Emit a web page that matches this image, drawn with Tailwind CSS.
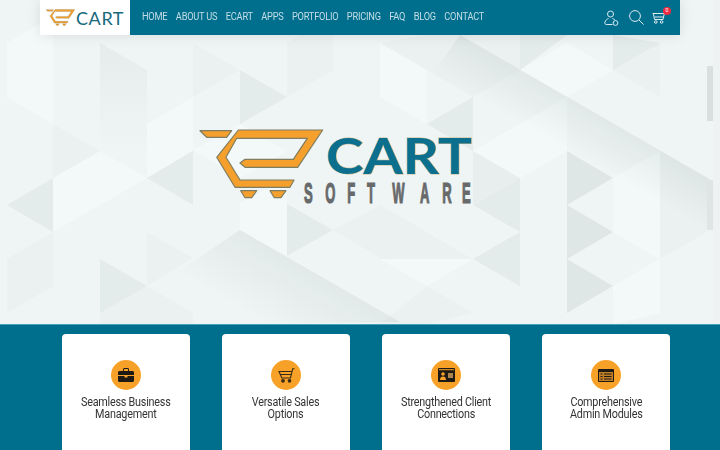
<!DOCTYPE html>
<html lang="en">
<head>
  <meta charset="UTF-8" />
  <meta name="viewport" content="width=device-width, initial-scale=1.0"/>
  <title>eCart Software</title>
  <script src="https://cdn.jsdelivr.net/npm/@tailwindcss/browser@4"></script>
</head>
<body class="w-full h-[450px] overflow-hidden bg-[#006f8e] font-['Roboto',sans-serif]">

  <!-- hero -->
  <section class="relative h-[324px] bg-[#eff5f5] flex flex-col overflow-hidden">
    <!-- triangle backdrop -->
    <svg class="absolute inset-0 blur-[0.5px]" width="720" height="324" viewBox="0 0 720 324">
      <defs>
        <linearGradient id="s1" gradientUnits="userSpaceOnUse" x1="520" y1="70" x2="497" y2="110">
          <stop offset="0" stop-color="#8a9a9a" stop-opacity=".14"/><stop offset="1" stop-color="#8a9a9a" stop-opacity="0"/>
        </linearGradient>
        <linearGradient id="s2" gradientUnits="userSpaceOnUse" x1="240" y1="230" x2="205" y2="290">
          <stop offset="0" stop-color="#8a9a9a" stop-opacity=".13"/><stop offset="1" stop-color="#8a9a9a" stop-opacity="0"/>
        </linearGradient>
        <linearGradient id="s3" gradientUnits="userSpaceOnUse" x1="100" y1="43" x2="100" y2="151">
          <stop offset="0" stop-color="#e5ecec"/><stop offset="1" stop-color="#eff5f5"/>
        </linearGradient>
      </defs>
      <!-- light facets -->
      <g fill="#f3f9f9">
        <polygon points="7,43 53,16 53,124 7,97"/>
        <polygon points="147,124 193,97 193,150 147,178"/>
        <polygon points="53,178 100,151 100,205 53,232"/>
        <polygon points="100,151 147,178 100,205"/>
        <polygon points="240,203 287,178 287,256 240,230"/>
        <polygon points="193,150 240,124 287,151 240,178"/>
        <polygon points="380,43 427,70 427,124 380,97"/>
        <polygon points="473,151 520,124 567,151 520,178"/>
        <polygon points="520,124 567,97 567,151"/>
        <polygon points="613,178 660,151 660,259 613,232"/>
        <polygon points="427,232 473,259 427,286 380,259"/>
        <polygon points="520,70 567,43 613,70 567,97"/>
        <polygon points="613,286 660,259 660,313 613,324"/>
      </g>
      <!-- grey facets -->
      <g fill="#ebf1f1">
        <polygon points="7,259 53,232 53,286 7,313"/>
        <polygon points="147,232 193,258 147,286"/>
        <polygon points="53,124 100,151 53,178"/>
        <polygon points="193,43 240,70 193,97"/>
        <polygon points="287,43 333,16 333,70 287,97"/>
        <polygon points="333,230 380,205 380,258"/>
        <polygon points="380,205 427,232 473,259 380,259"/>
        <polygon points="380,43 427,35 567,35 520,70 473,97 427,70"/>
        <polygon points="613,70 660,97 660,43"/>
        <polygon points="660,151 707,178 707,232 660,259"/>
        <polygon points="100,310 147,286 193,313 193,324 100,324"/>
        <polygon points="427,286 473,313 427,324 380,324"/>
      </g>
      <polygon points="100,43 147,70 147,178 100,151" fill="url(#s3)"/>
      <!-- darker facets -->
      <g fill="#e4ebeb">
        <polygon points="240,70 287,97 240,124"/>
        <polygon points="7,205 53,178 53,232"/>
        <polygon points="100,259 147,286 100,313"/>
        <polygon points="147,178 193,151 193,205"/>
        <polygon points="287,204 333,230 287,256"/>
        <polygon points="520,35 567,35 520,70"/>
        <polygon points="613,35 660,43 613,70"/>
        <polygon points="427,124 473,97 473,151"/>
        <polygon points="473,259 520,232 520,286"/>
        <polygon points="473,205 520,178 520,232"/>
      </g>
      <g fill="#dfe6e6">
        <polygon points="567,151 613,178 567,205"/>
        <polygon points="567,205 613,232 567,259"/>
        <polygon points="567,259 613,286 567,313"/>
      </g>
      <polygon points="473,151 520,178 473,205" fill="#e8eeee"/>
      <!-- long diagonal shadows -->
      <polygon points="460,35 713,181 713,300 400,120" fill="url(#s1)"/>
      <polygon points="240,230 400,322 240,324 160,284" fill="url(#s2)"/>
      <!-- strip on the right edge -->
      <rect x="713" y="0" width="7" height="324" fill="#eef2f3"/>
      <rect x="707" y="66" width="6" height="55" fill="#d8dfdf"/>
      <rect x="707" y="180" width="6" height="50" fill="#dfe5e5"/>
    </svg>

    <!-- header -->
    <header class="relative mx-auto w-[640px] h-[35px] flex shadow-[0_0_14px_rgba(0,0,0,0.1)]">
      <a href="#" class="w-[90px] h-full bg-white flex items-center pl-[6px]">
        <svg width="29" height="17" viewBox="200 130 123 68">
          <use href="#cart-mark"/>
        </svg>
        <span class="ml-px text-[18px] leading-none tracking-[0.6px] text-[#17697c] font-['Lato',sans-serif]">CART</span>
      </a>
      <nav class="flex-1 bg-[#006f8e] flex items-center pl-3 pr-[15px]">
        <ul class="flex gap-[9.6px] text-[10.5px] tracking-[-0.25px] leading-none text-[#c4dde5] origin-left scale-x-[.88]">
          <li><a href="#">HOME</a></li>
          <li><a href="#">ABOUT US</a></li>
          <li><a href="#">ECART</a></li>
          <li><a href="#">APPS</a></li>
          <li><a href="#">PORTFOLIO</a></li>
          <li><a href="#">PRICING</a></li>
          <li><a href="#">FAQ</a></li>
          <li><a href="#">BLOG</a></li>
          <li><a href="#">CONTACT</a></li>
        </ul>
        <div class="ml-auto flex items-center text-[#dcebf0]">
          <svg width="15" height="16" viewBox="0 0 15 16" fill="none" stroke="currentColor" stroke-width="1">
            <circle cx="6.500" cy="4" r="3"/>
            <path d="M8.500 14.500H2.500C1 14.500.5 13.400 1 12c.6-1.800 2-3 3.500-3.500M8.500 8.500c1 .3 1.900.9 2.500 1.700"/>
            <circle cx="11.500" cy="13" r="2.400"/>
          </svg>
          <svg class="ml-[10px]" width="15" height="15" viewBox="0 0 15 15" fill="none" stroke="currentColor" stroke-width="1">
            <circle cx="6" cy="6" r="5.400"/>
            <path d="M10 10l4.600 4.600"/>
          </svg>
          <div class="relative ml-[8px] w-[13px] h-[12px]">
            <svg width="13" height="12" viewBox="0 0 13 12" fill="none" stroke="currentColor" stroke-width="1">
              <path d="M.5 1.500h11.800L11 7.500H2.500L1.500 2M2.600 5h9"/>
              <circle cx="3.800" cy="10" r="1.300"/>
              <circle cx="9.600" cy="10" r="1.300"/>
            </svg>
            <span class="absolute top-[-5px] left-[11px] w-[8px] h-[8px] rounded-full bg-[#ef2b41] flex items-center justify-center text-[5px] leading-none text-white">0</span>
          </div>
        </div>
      </nav>
    </header>

    <!-- main logo -->
    <svg class="relative ml-[195px] mt-[90px]" width="285" height="82" viewBox="195 125 285 82">
      <defs>
        <g id="cart-mark" fill="#f5a02c" stroke="#7f7d62" stroke-width="1.200" stroke-linejoin="round">
          <polygon points="200,130.700 231.700,130.700 226.700,137.300 206.700,137.300"/>
          <polygon points="238.300,130 322.700,130 297.700,167.300 245,167.300 240,163 245,159.300 293.300,159.300 307.300,138.300 236.700,138.300 226,157.300 240,180 294,180 290,187.300 235,187.300 216.700,157.300"/>
          <polygon points="240.700,190.700 256.700,190.700 251.700,197.700 245,197.700"/>
          <polygon points="270,190.700 286,190.700 281,197.700 274.300,197.700"/>
        </g>
      </defs>
      <use href="#cart-mark"/>
      <text x="326" y="174" textLength="146" lengthAdjust="spacingAndGlyphs" font-family="Lato, sans-serif" font-weight="700" font-size="49" fill="#0b6f8d" stroke="#cdb98d" stroke-width="1" paint-order="stroke">CART</text>
      <g transform="translate(304 203) scale(.45 1)" fill="#67696b" stroke="#67696b" stroke-width="1.200" font-family="'Liberation Sans', sans-serif" font-weight="700" font-size="29">
        <text x="0 47 96 140 196 258 307 351">SOFTWARE</text>
      </g>
    </svg>
  </section>

  <!-- features -->
  <section class="h-[126px] border-t border-[#49a3b6] bg-[#006f8e] pt-[9px] overflow-hidden">
    <div class="w-[608px] ml-[62px] grid grid-cols-4 gap-8">

      <div class="h-[140px] bg-white rounded-[4px] pt-[26px] flex flex-col items-center text-center">
        <div class="w-[30px] h-[30px] rounded-full bg-[#f8a129] flex items-center justify-center">
          <svg width="16" height="14" viewBox="0 0 16 14" fill="#1d1a16">
            <path d="M5 3V1.500C5 .7 5.600 0 6.500 0h3c.9 0 1.500.7 1.500 1.500V3H10V1.500a.4.4 0 0 0-.5-.4h-3a.4.4 0 0 0-.5.4V3z"/>
            <path d="M1.500 3h13c.8 0 1.500.7 1.500 1.500V7H0V4.500C0 3.700.7 3 1.500 3zM0 8h6.500v1.500h3V8H16v4.500c0 .8-.7 1.500-1.500 1.500h-13C.7 14 0 13.300 0 12.500z"/>
          </svg>
        </div>
        <h3 class="mt-[6px] text-[12px] tracking-[-0.25px] leading-[12px] text-[#333] scale-x-[.9] whitespace-nowrap">Seamless Business<br>Management</h3>
      </div>

      <div class="h-[140px] bg-white rounded-[4px] pt-[26px] flex flex-col items-center text-center">
        <div class="w-[30px] h-[30px] rounded-full bg-[#f8a129] flex items-center justify-center">
          <svg width="17" height="15" viewBox="0 0 17 15" fill="none" stroke="#3a2a14" stroke-width="1.100">
            <path d="M16.500.7h-1.800L12.500 10H3.800L1 3.500h13M2.300 6.500h11"/>
            <circle cx="5" cy="12.800" r="1.300" fill="#3a2a14"/>
            <circle cx="11.500" cy="12.800" r="1.300" fill="#3a2a14"/>
          </svg>
        </div>
        <h3 class="mt-[6px] text-[12px] tracking-[-0.25px] leading-[12px] text-[#333] scale-x-[.9] whitespace-nowrap">Versatile Sales<br>Options</h3>
      </div>

      <div class="h-[140px] bg-white rounded-[4px] pt-[26px] flex flex-col items-center text-center">
        <div class="w-[30px] h-[30px] rounded-full bg-[#f8a129] flex items-center justify-center">
          <svg width="17" height="14" viewBox="0 0 17 14">
            <rect width="17" height="14" rx="1" fill="#1d1a16"/>
            <rect x="1" y="1.200" width="15" height="1" fill="#f8a129"/>
            <circle cx="5" cy="6" r="1.800" fill="#f8a129"/>
            <path d="M2 12c0-2.500 1.300-3.500 3-3.500S8 9.500 8 12z" fill="#f8a129"/>
            <rect x="10" y="5" width="5" height="5" fill="#a98350"/>
          </svg>
        </div>
        <h3 class="mt-[6px] text-[12px] tracking-[-0.25px] leading-[12px] text-[#333] scale-x-[.9] whitespace-nowrap">Strengthened Client<br>Connections</h3>
      </div>

      <div class="h-[140px] bg-white rounded-[4px] pt-[26px] flex flex-col items-center text-center">
        <div class="w-[30px] h-[30px] rounded-full bg-[#f8a129] flex items-center justify-center">
          <svg width="16" height="13" viewBox="0 0 16 13">
            <rect width="16" height="13" rx="1" fill="#1d1a16"/>
            <rect x="1" y="3" width="14" height="9" fill="#c07e25"/>
            <path d="M2.500 5h2M2.500 7.500h2M2.500 10h2M6 5h7.500M6 7.500h7.500M6 10h7.500" stroke="#1d1a16" stroke-width="1"/>
          </svg>
        </div>
        <h3 class="mt-[6px] text-[12px] tracking-[-0.25px] leading-[12px] text-[#333] scale-x-[.9] whitespace-nowrap">Comprehensive<br>Admin Modules</h3>
      </div>

    </div>
  </section>

</body>
</html>
